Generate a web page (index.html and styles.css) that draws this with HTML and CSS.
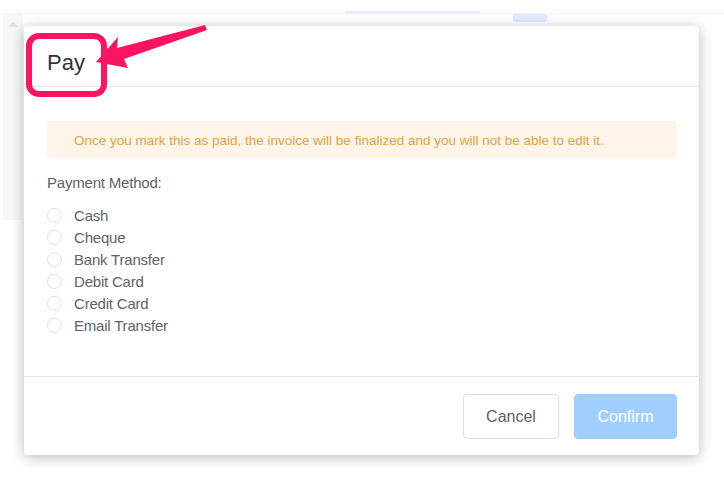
FILE: index.html
```html
<!DOCTYPE html>
<html>
<head>
<meta charset="utf-8">
<link rel="stylesheet" href="styles.css">
</head>
<body>
<div class="page">
  <div class="topbar">
    <div class="tab-line"></div>
    <div class="tab-pill"></div>
  </div>
  <div class="main">
    <div class="side"><span class="caret"></span></div>
    <div class="content"></div>
  </div>
</div>

<div class="dialog">
  <div class="dialog-header"><span class="title">Pay</span></div>
  <div class="dialog-body">
    <div class="alert">Once you mark this as paid, the invoice will be finalized and you will not be able to edit it.</div>
    <div class="label">Payment Method:</div>
    <div class="radios">
      <label class="radio"><span class="dot"></span><span>Cash</span></label>
      <label class="radio"><span class="dot"></span><span>Cheque</span></label>
      <label class="radio"><span class="dot"></span><span>Bank Transfer</span></label>
      <label class="radio"><span class="dot"></span><span>Debit Card</span></label>
      <label class="radio"><span class="dot"></span><span>Credit Card</span></label>
      <label class="radio"><span class="dot"></span><span>Email Transfer</span></label>
    </div>
  </div>
  <div class="dialog-footer">
    <button class="btn btn-cancel">Cancel</button>
    <button class="btn btn-confirm">Confirm</button>
  </div>
</div>

<svg class="annot" width="724" height="485" viewBox="0 0 724 485">
  <rect x="29" y="36" width="75" height="58" rx="10" ry="10" fill="none" stroke="#fb1461" stroke-width="6"/>
  <polygon points="96,62 118,37 117,48 205,25 207,30 124,59 128,68" fill="#fb1461"/>
</svg>
</body>
</html>
```
FILE: styles.css
```css
html, body {
  margin: 0;
  padding: 0;
  background: #ffffff;
  font-family: "Liberation Sans", Arial, sans-serif;
}
.page {
  width: 724px;
  height: 485px;
  display: flex;
  flex-direction: column;
}
.topbar {
  height: 14px;
  border-bottom: 1px solid #f2f2f2;
  display: flex;
  align-items: flex-end;
  padding-left: 345px;
  gap: 33px;
  box-sizing: border-box;
  position: relative;
}
.tab-line {
  width: 135px;
  height: 2px;
  background: #e3efff;
}
.tab-pill {
  width: 34px;
  height: 8px;
  background: #e0edff;
  border-radius: 0 0 2px 2px;
  margin-bottom: -9px;
}
.main {
  flex: 1;
  display: flex;
}
.side {
  width: 20px;
  margin-left: 3px;
  height: 206px;
  background: #f7f7f7;
  display: flex;
  justify-content: center;
  padding-top: 8px;
  box-sizing: border-box;
}
.caret {
  width: 0;
  height: 0;
  border-left: 5px solid transparent;
  border-right: 5px solid transparent;
  border-bottom: 5px solid #e2e2e2;
}
.content { flex: 1; }

.dialog {
  position: absolute;
  left: 24px;
  top: 26px;
  width: 675px;
  height: 429px;
  background: #fff;
  border-radius: 4px;
  box-shadow: 0 2px 14px rgba(0,0,0,0.28);
  display: flex;
  flex-direction: column;
}
.dialog-header {
  height: 61px;
  border-bottom: 1px solid #e4e4e4;
  display: flex;
  align-items: center;
  padding-left: 23px;
  padding-top: 14px;
  box-sizing: border-box;
}
.title {
  font-size: 22px;
  color: #333;
}
.dialog-body {
  flex: 1;
  padding: 34px 22px 0 23px;
  border-bottom: 1px solid #e4e4e4;
}
.alert {
  height: 37px;
  background: #fdf5ea;
  border-radius: 4px;
  color: #e6a23c;
  font-size: 13.5px;
  display: flex;
  align-items: center;
  padding-left: 27px;
  padding-top: 1px;
  box-sizing: border-box;
}
.label {
  margin-top: 16px;
  font-size: 15px;
  color: #606266;
  line-height: 18px;
  letter-spacing: -0.2px;
}
.radios {
  margin-top: 12px;
  display: flex;
  flex-direction: column;
}
.radio {
  display: flex;
  align-items: center;
  height: 22px;
  font-size: 15px;
  color: #606266;
  letter-spacing: -0.2px;
}
.dot {
  width: 13px;
  height: 13px;
  border: 1px solid #dcdfe6;
  border-radius: 50%;
  margin-right: 12px;
  box-sizing: content-box;
}
.dialog-footer {
  height: 78px;
  display: flex;
  justify-content: flex-end;
  align-items: flex-start;
  padding: 17px 22px 0 0;
  gap: 15px;
  box-sizing: border-box;
}
.btn {
  height: 45px;
  border-radius: 4px;
  font-family: "Liberation Sans", Arial, sans-serif;
  font-size: 16px;
  padding: 0;
}
.btn-cancel {
  width: 96px;
  background: #fff;
  border: 1px solid #dcdfe6;
  color: #606266;
}
.btn-confirm {
  width: 103px;
  background: #a0cfff;
  border: 1px solid #a0cfff;
  color: #fff;
}
.annot {
  position: absolute;
  left: 0;
  top: 0;
  pointer-events: none;
}
```
